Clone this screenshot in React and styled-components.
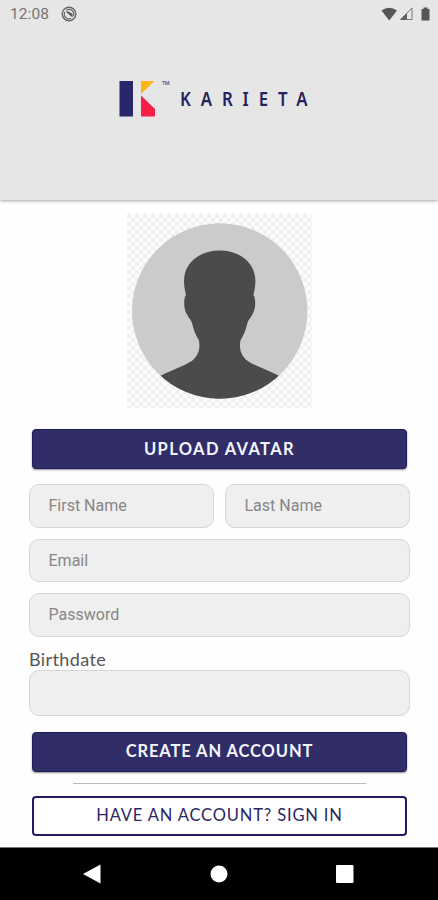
import React from 'react';
import styled, { createGlobalStyle } from 'styled-components';

const GlobalStyle = createGlobalStyle`
  * {
    box-sizing: border-box;
  }
  body {
    margin: 0;
    background: #fff;
    font-family: Roboto, sans-serif;
  }
`
const Screen = styled.div`
  display: flex;
  flex-direction: column;
  width: 438px;
  height: 900px;
  overflow: hidden;
  background: #fefefe;
`
const Header = styled.header`
  flex: none;
  height: 200px;
  background: #e6e6e6;
  box-shadow: 0 1px 3px rgba(0, 0, 0, 0.35);
`
const StatusBar = styled.div`
  display: flex;
  align-items: center;
  height: 28px;
  padding: 0 7px 0 10px;
  color: #757575;
  font-size: 15.5px;
  letter-spacing: 0.1px;
`
const SyncIcon = styled.svg`
  margin-left: 12px;
`
const StatusIcons = styled.svg`
  margin-left: auto;
`
const Brand = styled.div`
  display: flex;
  align-items: flex-start;
  padding: 52px 0 0 119px;
`
const BrandName = styled.span`
  margin: 8px 0 0 10px;
  color: #25225f;
  font-family: "Noto Sans", sans-serif;
  font-size: 19.5px;
  font-weight: 600;
  line-height: 22px;
  letter-spacing: 11.5px;
  transform: scaleX(0.86);
  transform-origin: left;
  white-space: nowrap;
`
const Trademark = styled.span`
  width: 8px;
  margin: 0 0 0 6px;
  color: #66648f;
  font-size: 5px;
  font-weight: 700;
  line-height: 6px;
`
const Form = styled.main`
  display: flex;
  flex-direction: column;
  flex: 1;
  padding: 14px 28px 0 29px;
`
const Avatar = styled.svg`
  align-self: center;
  flex: none;
  margin-bottom: 21px;
`
const Button = styled.button`
  flex: none;
  height: 40px;
  margin: ${props => props.$top || 0}px 3px 0;
  padding: 0 0 1px;
  border: ${props => (props.$outlined ? 2 : 1)}px solid #211c61;
  border-radius: 4px;
  background: ${props => (props.$outlined ? '#fff' : '#302d67')};
  box-shadow: ${props => (props.$outlined ? 'none' : '0 1px 2px rgba(0, 0, 0, 0.45)')};
  color: ${props => (props.$outlined ? '#2b2763' : '#f4f4ff')};
  font-family: Lato, sans-serif;
  font-size: 16.5px;
  font-weight: ${props => (props.$outlined ? 400 : 700)};
  letter-spacing: ${props => props.$spacing};
`
const Row = styled.div`
  display: grid;
  grid-template-columns: 1fr 1fr;
  gap: 11px;
  margin-top: 15px;
`
const Input = styled.input`
  width: 100%;
  height: ${props => props.$height || 43.5}px;
  margin-top: ${props => props.$top || 0}px;
  padding: 0 18.5px;
  border: 1px solid #d6d6d6;
  border-radius: 10px;
  outline: none;
  background: #efefef;
  color: #444;
  font-family: Roboto, sans-serif;
  font-size: 16px;
  &::placeholder {
    color: #868686;
    opacity: 1;
  }
`
const Label = styled.label`
  margin-top: 12px;
  padding-bottom: 1px;
  color: #555;
  font-family: Lato, sans-serif;
  font-size: 18px;
  line-height: 20px;
  letter-spacing: 0.4px;
`
const Divider = styled.hr`
  flex: none;
  width: 293px;
  height: 1px;
  margin: 11px 0 12px 44px;
  border: 0;
  background: #bcbcbc;
`
const NavBar = styled.nav`
  display: flex;
  flex: none;
  justify-content: center;
  height: 53px;
  border-top: 1px solid #777;
  background: #000;
`

function Logo() {
  return (
    <svg width="37" height="38" viewBox="0 0 37 38">
      <path fill="#29266a" d="M.5 1h13.500v35.500H.5z" />
      <path fill="#fdb515" d="M22 1h13.500L22 14z" />
      <path fill="#f51f47" d="M22 15.500L36 29v7.500H22z" />
    </svg>
  )
}

function AvatarPicture() {
  return (
    <Avatar width="185" height="194" viewBox="0 0 185 194">
      <defs>
        <pattern id="checker" width="8" height="8" patternUnits="userSpaceOnUse">
          <path fill="#fdfdfd" d="M0 0h8v8H0z" />
          <path fill="#f0f0f0" d="M0 0h4v4H0zM4 4h4v4H4z" />
        </pattern>
        <clipPath id="disc">
          <circle cx="92.700" cy="97" r="87.700" />
        </clipPath>
      </defs>
      <rect width="185" height="194" fill="url(#checker)" />
      <circle cx="92.700" cy="97" r="87.700" fill="#cbcbcb" />
      <path
        clipPath="url(#disc)"
        fill="#4b4b4b"
        d="M92.700 36.500C71 36.500 57 50 57 67C57 72 58 77 59 81C57.500 83 57 86 57.300 92C58 98 60.500 101 62 104C64 106 65 108 65.500 111C67 117 69 122 71.800 126C73.500 134 72 141 64.700 147C59 151 45 156 33 162V190H152.400V162C140.400 156 126.400 151 120.700 147C113.400 141 111.900 134 113.600 126C116.400 122 118.400 117 119.900 111C120.400 108 121.400 106 123.400 104C124.900 101 127.400 98 128.100 92C128.400 86 127.900 83 126.400 81C127.400 77 128.400 72 128.400 67C128.400 50 114.400 36.500 92.700 36.500Z"
      />
    </Avatar>
  )
}

function App() {
  return (
    <>
      <GlobalStyle />
      <Screen>
        <Header>
          <StatusBar>
            <span>12:08</span>
            <SyncIcon width="16" height="16" viewBox="0 0 16 16">
              <circle cx="8" cy="8" r="6.800" fill="none" stroke="#666" strokeWidth="1.400" />
              <path d="M5.500 4.200A4.600 4.600 0 0 1 12.200 10" fill="none" stroke="#666" strokeWidth="1.200" />
              <path d="M3.800 6A4.600 4.600 0 0 0 10 12.200" fill="none" stroke="#666" strokeWidth="1.200" />
              <path d="M4.500 5.500L7.500 5.500L11.500 8V11.500Z" fill="#555" />
            </SyncIcon>
            <StatusIcons width="50" height="16" viewBox="0 0 50 16">
              <path fill="#565656" d="M.5 4.500Q8.200-1 16 4.500L8.200 14.500Z" />
              <path fill="none" stroke="#777" d="M19.500 13.500L31 2v11.500z" />
              <path fill="#606060" d="M19 14l7-7v7z" />
              <path fill="#565656" d="M40.500 3h2V1.500h4V3h2v11.500h-8z" />
            </StatusIcons>
          </StatusBar>
          <Brand>
            <Logo />
            <Trademark>TM</Trademark>
            <BrandName>KARIETA</BrandName>
          </Brand>
        </Header>
        <Form>
          <AvatarPicture />
          <Button $spacing="1.37px">UPLOAD AVATAR</Button>
          <Row>
            <Input placeholder="First Name" />
            <Input placeholder="Last Name" />
          </Row>
          <Input $top={11} placeholder="Email" />
          <Input $top={11} placeholder="Password" />
          <Label htmlFor="birthdate">Birthdate</Label>
          <Input id="birthdate" $height={46} />
          <Button $top={16} $spacing="0.9px">CREATE AN ACCOUNT</Button>
          <Divider />
          <Button $outlined $spacing="0.85px">HAVE AN ACCOUNT? SIGN IN</Button>
        </Form>
        <NavBar>
          <svg width="272" height="52" viewBox="0 0 272 52">
            <path fill="#fff" d="M0 26L17.500 16.500v19z" />
            <circle cx="136" cy="26" r="8.500" fill="#fff" />
            <rect x="253" y="17" width="17.500" height="18" rx="1" fill="#fff" />
          </svg>
        </NavBar>
      </Screen>
    </>
  )
}

export default App
